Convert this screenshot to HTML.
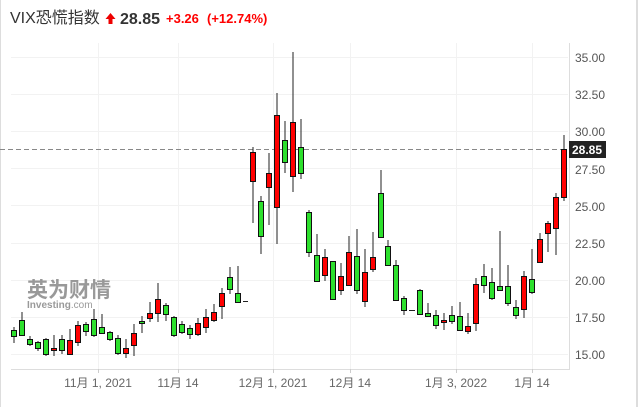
<!DOCTYPE html>
<html><head><meta charset="utf-8"><style>
html,body{margin:0;padding:0;background:#fff;width:638px;height:407px;overflow:hidden}
svg{display:block}
text{font-family:"Liberation Sans","Noto Sans CJK SC",sans-serif}
</style></head><body>
<svg width="638" height="407" viewBox="0 0 638 407">
<rect x="0" y="0" width="1" height="407" fill="#ddd"/>
<rect x="636" y="0" width="2" height="407" fill="#ddd"/>
<text x="10" y="23" font-size="16" fill="#333">VIX恐慌指数</text>
<path d="M110.5 13 L115.5 19 L112.5 19 L112.5 24 L108.5 24 L108.5 19 L105.5 19 Z" fill="#e00"/>
<text x="120" y="24" font-size="16" font-weight="bold" fill="#333">28.85</text>
<text x="166" y="23" font-size="13" font-weight="bold" fill="#f00">+3.26</text>
<text x="207" y="23" font-size="13" font-weight="bold" fill="#f00">(+12.74%)</text>
<g stroke="#f2f2f2" stroke-width="1">
<line x1="11" y1="57.5" x2="568" y2="57.5"/><line x1="11" y1="94.5" x2="568" y2="94.5"/><line x1="11" y1="131.5" x2="568" y2="131.5"/><line x1="11" y1="168.5" x2="568" y2="168.5"/><line x1="11" y1="205.5" x2="568" y2="205.5"/><line x1="11" y1="243.5" x2="568" y2="243.5"/><line x1="11" y1="280.5" x2="568" y2="280.5"/><line x1="11" y1="317.5" x2="568" y2="317.5"/><line x1="11" y1="354.5" x2="568" y2="354.5"/>
<line x1="98.5" y1="43" x2="98.5" y2="369"/><line x1="178.5" y1="43" x2="178.5" y2="369"/><line x1="273.5" y1="43" x2="273.5" y2="369"/><line x1="350.5" y1="43" x2="350.5" y2="369"/><line x1="456.5" y1="43" x2="456.5" y2="369"/><line x1="532.5" y1="43" x2="532.5" y2="369"/>
</g>
<line x1="11" y1="369.5" x2="569" y2="369.5" stroke="#ddd"/>
<line x1="569.5" y1="43" x2="569.5" y2="370" stroke="#ddd"/>
<g stroke="#ccc"><line x1="98.5" y1="369" x2="98.5" y2="373"/><line x1="178.5" y1="369" x2="178.5" y2="373"/><line x1="273.5" y1="369" x2="273.5" y2="373"/><line x1="350.5" y1="369" x2="350.5" y2="373"/><line x1="456.5" y1="369" x2="456.5" y2="373"/><line x1="532.5" y1="369" x2="532.5" y2="373"/></g>
<g font-size="12" fill="#666" text-anchor="middle">
<text x="98" y="387">11月 1, 2021</text><text x="178" y="387">11月 14</text><text x="273" y="387">12月 1, 2021</text><text x="350" y="387">12月 14</text><text x="456" y="387">1月 3, 2022</text><text x="532" y="387">1月 14</text>
</g>
<g font-size="12" fill="#555">
<text x="575" y="62">35.00</text><text x="575" y="99">32.50</text><text x="575" y="136">30.00</text><text x="575" y="174">27.50</text><text x="575" y="211">25.00</text><text x="575" y="248">22.50</text><text x="575" y="285">20.00</text><text x="575" y="322">17.50</text><text x="575" y="359">15.00</text>
</g>
<g fill="#999" opacity="0.85">
<text x="27" y="297" font-size="21" font-weight="bold" fill="#888">英为财情</text>
<text x="27" y="308" font-size="10" font-weight="bold" fill="#888">Investing<tspan font-weight="normal">.com</tspan></text>
</g>
<line x1="0" y1="149.5" x2="568" y2="149.5" stroke="#888" stroke-dasharray="5,3"/>
<g stroke="#222" stroke-width="1">
<line x1="14" y1="327" x2="14" y2="343"/><line x1="22" y1="312" x2="22" y2="335"/><line x1="30" y1="336" x2="30" y2="346"/><line x1="38" y1="341" x2="38" y2="351"/><line x1="46" y1="338" x2="46" y2="356"/><line x1="54" y1="335" x2="54" y2="356"/><line x1="62" y1="335" x2="62" y2="354"/><line x1="70" y1="329" x2="70" y2="355"/><line x1="78" y1="321" x2="78" y2="346"/><line x1="86" y1="322" x2="86" y2="336"/><line x1="94" y1="309" x2="94" y2="337"/><line x1="102" y1="314" x2="102" y2="334"/><line x1="110" y1="331" x2="110" y2="341"/><line x1="118" y1="335" x2="118" y2="355"/><line x1="126" y1="339" x2="126" y2="358"/><line x1="134" y1="324" x2="134" y2="356"/><line x1="142" y1="316" x2="142" y2="333"/><line x1="150" y1="302" x2="150" y2="322"/><line x1="158" y1="283" x2="158" y2="322"/><line x1="166" y1="303" x2="166" y2="321"/><line x1="174" y1="316" x2="174" y2="337"/><line x1="182" y1="321" x2="182" y2="334"/><line x1="190" y1="325" x2="190" y2="339"/><line x1="198" y1="318" x2="198" y2="336"/><line x1="206" y1="309" x2="206" y2="333"/><line x1="214" y1="304" x2="214" y2="322"/><line x1="222" y1="288" x2="222" y2="319"/><line x1="230" y1="267" x2="230" y2="294"/><line x1="238" y1="266" x2="238" y2="303"/><line x1="243" y1="301.5" x2="248" y2="301.5"/>
<line x1="253" y1="147" x2="253" y2="223"/><line x1="261" y1="196" x2="261" y2="254"/><line x1="269" y1="153" x2="269" y2="225"/><line x1="277" y1="93" x2="277" y2="244"/><line x1="285" y1="121" x2="285" y2="173"/><line x1="293" y1="52" x2="293" y2="192"/><line x1="301" y1="119" x2="301" y2="179"/><line x1="309" y1="210" x2="309" y2="257"/><line x1="317" y1="234" x2="317" y2="282"/><line x1="325" y1="249" x2="325" y2="281"/><line x1="333" y1="261" x2="333" y2="299"/><line x1="341" y1="263" x2="341" y2="295"/><line x1="349" y1="236" x2="349" y2="285"/><line x1="357" y1="229" x2="357" y2="294"/><line x1="365" y1="249" x2="365" y2="307"/><line x1="373" y1="232" x2="373" y2="272"/><line x1="381" y1="170" x2="381" y2="237"/><line x1="388" y1="240" x2="388" y2="265"/><line x1="396" y1="260" x2="396" y2="301"/><line x1="404" y1="296" x2="404" y2="315"/><line x1="409" y1="310.5" x2="415" y2="310.5"/><line x1="420" y1="289" x2="420" y2="315"/>
<line x1="428" y1="303" x2="428" y2="317"/><line x1="436" y1="310" x2="436" y2="329"/><line x1="444" y1="313" x2="444" y2="330"/><line x1="452" y1="306" x2="452" y2="324"/><line x1="460" y1="302" x2="460" y2="331"/><line x1="468" y1="313" x2="468" y2="334"/><line x1="476" y1="278" x2="476" y2="331"/><line x1="484" y1="264" x2="484" y2="293"/><line x1="492" y1="268" x2="492" y2="300"/><line x1="500" y1="231" x2="500" y2="290"/><line x1="508" y1="265" x2="508" y2="306"/><line x1="516" y1="300" x2="516" y2="319"/><line x1="524" y1="271" x2="524" y2="318"/><line x1="532" y1="249" x2="532" y2="294"/><line x1="540" y1="233" x2="540" y2="262"/><line x1="548" y1="221" x2="548" y2="252"/><line x1="556" y1="193" x2="556" y2="255"/><line x1="564" y1="135" x2="564" y2="201"/>
</g>
<g stroke="#111" stroke-width="1">
<g fill="#2de02d">
<rect x="11.5" y="330.5" width="5" height="6"/><rect x="19.5" y="320.5" width="5" height="15"/><rect x="27.5" y="339.5" width="5" height="5"/><rect x="35.5" y="342.5" width="5" height="6"/><rect x="43.5" y="339.5" width="5" height="15"/><rect x="59.5" y="339.5" width="5" height="11"/><rect x="83.5" y="324.5" width="5" height="7"/><rect x="91.5" y="319.5" width="5" height="16"/><rect x="99.5" y="327.5" width="5" height="6"/><rect x="107.5" y="332.5" width="5" height="7"/><rect x="115.5" y="338.5" width="5" height="15"/><rect x="139.5" y="321.5" width="5" height="2"/><rect x="163.5" y="305.5" width="5" height="9"/><rect x="171.5" y="317.5" width="5" height="18"/><rect x="179.5" y="324.5" width="5" height="8"/><rect x="187.5" y="328.5" width="5" height="6"/><rect x="227.5" y="277.5" width="5" height="12"/><rect x="235.5" y="293.5" width="5" height="9"/>
<rect x="258.5" y="201.5" width="5" height="35"/><rect x="282.5" y="140.5" width="5" height="22"/><rect x="298.5" y="147.5" width="5" height="26"/><rect x="306.5" y="212.5" width="5" height="40"/><rect x="314.5" y="255.5" width="5" height="26"/><rect x="330.5" y="261.5" width="5" height="38"/><rect x="354.5" y="256.5" width="5" height="34"/><rect x="378.5" y="193.5" width="5" height="44"/><rect x="385.5" y="246.5" width="5" height="19"/><rect x="393.5" y="265.5" width="5" height="35"/><rect x="401.5" y="298.5" width="5" height="12"/><rect x="417.5" y="290.5" width="5" height="24"/>
<rect x="425.5" y="313.5" width="5" height="3"/><rect x="433.5" y="315.5" width="5" height="10"/><rect x="449.5" y="315.5" width="5" height="6"/><rect x="457.5" y="316.5" width="5" height="14"/><rect x="481.5" y="276.5" width="5" height="9"/><rect x="489.5" y="282.5" width="5" height="16"/><rect x="497.5" y="286.5" width="5" height="4"/><rect x="505.5" y="286.5" width="5" height="17"/><rect x="513.5" y="307.5" width="5" height="8"/><rect x="529.5" y="279.5" width="5" height="13"/>
</g>
<g fill="#f00">
<rect x="51.5" y="348.5" width="5" height="2"/><rect x="67.5" y="340.5" width="5" height="14"/><rect x="75.5" y="325.5" width="5" height="17"/><rect x="123.5" y="348.5" width="5" height="5"/><rect x="131.5" y="333.5" width="5" height="12"/><rect x="147.5" y="313.5" width="5" height="5"/><rect x="155.5" y="299.5" width="5" height="14"/><rect x="195.5" y="323.5" width="5" height="11"/><rect x="203.5" y="317.5" width="5" height="10"/><rect x="211.5" y="312.5" width="5" height="8"/><rect x="219.5" y="293.5" width="5" height="13"/>
<rect x="250.5" y="152.5" width="5" height="29"/><rect x="266.5" y="173.5" width="5" height="14"/><rect x="274.5" y="115.5" width="5" height="92"/><rect x="290.5" y="122.5" width="5" height="54"/><rect x="322.5" y="257.5" width="5" height="18"/><rect x="338.5" y="276.5" width="5" height="14"/><rect x="346.5" y="252.5" width="5" height="33"/><rect x="362.5" y="272.5" width="5" height="29"/><rect x="370.5" y="257.5" width="5" height="12"/>
<rect x="441.5" y="320.5" width="5" height="2"/><rect x="465.5" y="326.5" width="5" height="5"/><rect x="473.5" y="284.5" width="5" height="39"/><rect x="521.5" y="276.5" width="5" height="33"/><rect x="537.5" y="239.5" width="5" height="23"/><rect x="545.5" y="223.5" width="5" height="10"/><rect x="553.5" y="197.5" width="5" height="31"/><rect x="561.5" y="149.5" width="5" height="48"/>
</g>
</g>
<rect x="569" y="141" width="37" height="17" fill="#222"/>
<text x="572" y="154" font-size="12" font-weight="bold" fill="#fff">28.85</text>
</svg>
</body></html>
